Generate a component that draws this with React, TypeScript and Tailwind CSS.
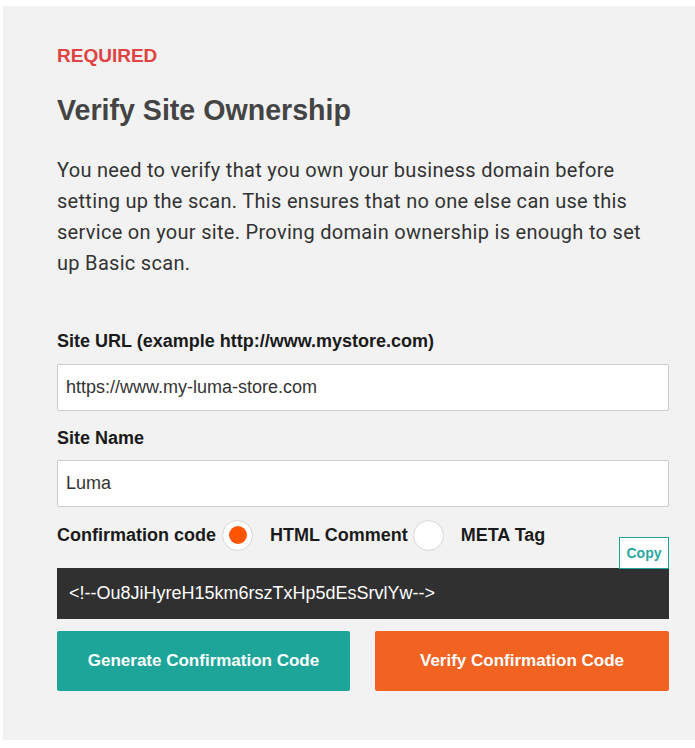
export default function App() {
  const arial = { fontFamily: '"Liberation Sans", Arial, sans-serif' };
  return (
    <div className="min-h-[748px] bg-white pt-[6px] pl-[3px]" style={arial}>
      <div className="bg-[#f2f2f2] w-[692px] min-h-[734px] pl-[54px] pr-[26px] pt-[39px] pb-[49px]">
        <div className="text-[19px] leading-[22px] font-bold text-[#e04343]">REQUIRED</div>
        <h1 className="mt-[27px] text-[28.6px] leading-[32px] font-bold text-[#444444]">Verify Site Ownership</h1>
        <p
          className="mt-[29px] text-[20px] leading-[31px] tracking-[0.3px] text-[#333333]"
          style={{ fontFamily: 'Roboto, "Noto Sans", sans-serif' }}
        >
          You need to verify that you own your business domain before setting up the scan. This ensures that no one else can use this service on your site. Proving domain ownership is enough to set up Basic scan.
        </p>

        <label className="block mt-[52px] text-[18px] leading-[20px] font-bold text-[#1a1a1a]">
          Site URL (example http://www.mystore.com)
        </label>
        <div className="mt-[13px] h-[47px] bg-white border border-[#cccccc] rounded-[2px] flex items-center px-[8px] text-[18px] text-[#333333]">
          https://www.my-luma-store.com
        </div>

        <label className="block mt-[17px] text-[18px] leading-[20px] font-bold text-[#1a1a1a]">Site Name</label>
        <div className="mt-[12px] h-[47px] bg-white border border-[#cccccc] rounded-[2px] flex items-center px-[8px] text-[18px] text-[#333333]">
          Luma
        </div>

        <div className="relative">
          <div className="mt-[13px] h-[30px] flex items-center text-[18px] font-bold text-[#1a1a1a]">
            <span>Confirmation code</span>
            <span className="ml-[6px] w-[31px] h-[31px] rounded-full bg-white border border-[#d6d6d6] flex items-center justify-center">
              <span className="w-[18px] h-[18px] rounded-full bg-[#ff5501]" />
            </span>
            <span className="ml-[17px]">HTML Comment</span>
            <span className="ml-[5px] w-[31px] h-[31px] rounded-full bg-white border border-[#d6d6d6]" />
            <span className="ml-[17px]">META Tag</span>
          </div>
          <button className="absolute right-0 top-[17px] w-[50px] h-[32px] bg-white border border-[#1fa39a] text-[#2aa8a0] text-[14px] font-bold flex items-center justify-center">
            Copy
          </button>
        </div>

        <div className="mt-[18px] h-[51px] bg-[#303030] text-white text-[18px] flex items-center px-[12px]">
          {'<!--Ou8JiHyreH15km6rszTxHp5dEsSrvlYw-->'}
        </div>

        <div className="mt-[12px] flex justify-between">
          <button className="w-[293px] h-[60px] bg-[#1ea59a] rounded-[2px] text-white text-[17px] font-bold">
            Generate Confirmation Code
          </button>
          <button className="w-[294px] h-[60px] bg-[#f26322] rounded-[2px] text-white text-[17px] font-bold">
            Verify Confirmation Code
          </button>
        </div>
      </div>
    </div>
  );
}
